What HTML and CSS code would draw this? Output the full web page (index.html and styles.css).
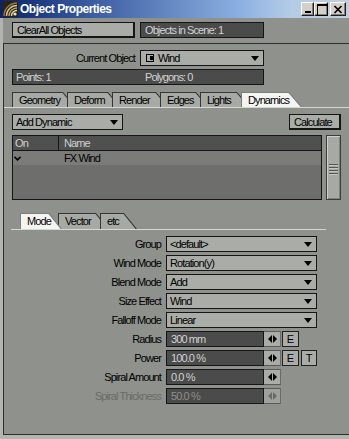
FILE: index.html
```html
<!DOCTYPE html>
<html>
<head>
<meta charset="utf-8">
<title>Object Properties</title>
<link rel="stylesheet" href="styles.css">
</head>
<body>
<div class="window">
  <div class="titlebar">
    <svg class="appicon" width="16" height="16" viewBox="0 0 16 16">
      <rect width="16" height="16" fill="#2b2519"/>
      <path d="M2 15 A13 13 0 0 1 15 2" stroke="#8c7a52" stroke-width="1.4" fill="none"/>
      <path d="M4.5 15 A10.5 10.5 0 0 1 15 4.5" stroke="#d8c08a" stroke-width="1.4" fill="none"/>
      <path d="M7 15 A8 8 0 0 1 15 7" stroke="#b9a06c" stroke-width="1.4" fill="none"/>
      <path d="M9.5 15 A5.5 5.5 0 0 1 15 9.5" stroke="#e6d6a8" stroke-width="1.4" fill="none"/>
      <circle cx="13" cy="13" r="1.6" fill="#f0e4c0"/>
    </svg>
    <span class="title">Object Properties</span>
    <div class="caption">
      <span class="cbtn cmin"></span>
      <span class="cbtn cmax"></span>
      <span class="cbtn cclose"><svg width="10" height="9" viewBox="0 0 10 9"><path d="M1.5 1 L8.5 8 M8.5 1 L1.5 8" stroke="#000" stroke-width="1.7"/></svg></span>
    </div>
  </div>
  <div class="client">
    <div class="toprow">
      <div class="btn clear">ClearAll Objects</div>
      <div class="dark count">Objects in Scene: 1</div>
    </div>
    <div class="panel">
      <div class="currow">
        <span class="curlbl">Current Object</span>
        <div class="select cursel">
          <svg class="objicon" width="8" height="8" viewBox="0 0 8 8"><rect x="0.5" y="0.5" width="7" height="7" fill="none" stroke="#000"/><rect x="4" y="2" width="3" height="4" fill="#000"/></svg>
          <span>Wind</span><i class="dd"></i>
        </div>
      </div>
      <div class="dark info"><span>Points: 1</span><span>Polygons: 0</span></div>
      <div class="tabs maintabs">
        <div class="tab t-geo"><span>Geometry</span></div>
        <div class="tab t-def"><span>Deform</span></div>
        <div class="tab t-ren"><span>Render</span></div>
        <div class="tab t-edg"><span>Edges</span></div>
        <div class="tab t-lig"><span>Lights</span></div>
        <div class="tab t-dyn active"><span>Dynamics</span></div>
      </div>
      <div class="actrow">
        <div class="select adddyn"><span>Add Dynamic</span><i class="dd"></i></div>
        <div class="btn calc">Calculate</div>
      </div>
      <div class="listrow">
        <div class="list">
          <div class="lhead"><span class="c-on">On</span><span class="c-name">Name</span></div>
          <div class="lrow"><span class="c-on"><svg width="7" height="5" viewBox="0 0 7 5"><path d="M0.5 0.8 L3.5 3.8 L6.5 0.8" stroke="#000" stroke-width="1.6" fill="none"/></svg></span><span class="c-name">FX Wind</span></div>
        </div>
        <div class="scroll"><div class="grip"><i></i><i></i><i></i><i></i></div></div>
      </div>
      <div class="tabs subtabs">
        <div class="tab s-mode active"><span>Mode</span></div>
        <div class="tab s-vec"><span>Vector</span></div>
        <div class="tab s-etc"><span>etc</span></div>
      </div>
      <div class="form">
        <div class="frow"><span class="flbl">Group</span><div class="select"><span>&lt;default&gt;</span><i class="dd"></i></div></div>
        <div class="frow"><span class="flbl">Wind Mode</span><div class="select"><span>Rotation(y)</span><i class="dd"></i></div></div>
        <div class="frow"><span class="flbl">Blend Mode</span><div class="select"><span>Add</span><i class="dd"></i></div></div>
        <div class="frow"><span class="flbl">Size Effect</span><div class="select"><span>Wind</span><i class="dd"></i></div></div>
        <div class="frow"><span class="flbl">Falloff Mode</span><div class="select"><span>Linear</span><i class="dd"></i></div></div>
        <div class="frow"><span class="flbl">Radius</span>
          <div class="numctl"><div class="dark num">300 mm</div><span class="arr"><svg width="9" height="8" viewBox="0 0 9 8"><path d="M0 4 L4 0 L4 8 Z M5 0 L9 4 L5 8 Z" fill="#000"/></svg></span><span class="sbtn">E</span></div>
        </div>
        <div class="frow"><span class="flbl">Power</span>
          <div class="numctl"><div class="dark num">100.0 %</div><span class="arr"><svg width="9" height="8" viewBox="0 0 9 8"><path d="M0 4 L4 0 L4 8 Z M5 0 L9 4 L5 8 Z" fill="#000"/></svg></span><span class="sbtn">E</span><span class="sbtn tbtn">T</span></div>
        </div>
        <div class="frow"><span class="flbl">Spiral Amount</span>
          <div class="numctl"><div class="dark num">0.0 %</div><span class="arr"><svg width="9" height="8" viewBox="0 0 9 8"><path d="M0 4 L4 0 L4 8 Z M5 0 L9 4 L5 8 Z" fill="#000"/></svg></span></div>
        </div>
        <div class="frow disabled"><span class="flbl">Spiral Thickness</span>
          <div class="numctl"><div class="dark num">50.0 %</div><span class="arr"><svg width="9" height="8" viewBox="0 0 9 8"><path d="M0 4 L4 0 L4 8 Z M5 0 L9 4 L5 8 Z" fill="#6a6a6a"/></svg></span></div>
        </div>
      </div>
    </div>
  </div>
</div>
</body>
</html>
```
FILE: styles.css
```css
* { box-sizing: border-box; }
html, body { margin: 0; padding: 0; }
body {
  background: #8e918c;
  font-family: "Liberation Sans", Arial, sans-serif;
  font-size: 11px;
  letter-spacing: -0.9px;
  color: #000;
  width: 349px;
  height: 439px;
  overflow: hidden;
}
.window {
  width: 349px;
  height: 439px;
  display: flex;
  flex-direction: column;
}

/* title bar */
.titlebar {
  height: 18px;
  flex: none;
  display: flex;
  align-items: center;
  padding-left: 2px;
  background: linear-gradient(to right, #0a246a 0, #3a5ca0 90px, #8cb0e2 240px, #b4cbe6 290px, #c2cfdd 349px);
}
.appicon { flex: none; display: block; }
.title {
  margin-left: 2px;
  color: #fff;
  font-weight: bold;
  font-size: 12px;
  letter-spacing: -0.5px;
}
.caption {
  margin-left: auto;
  display: flex;
  padding-right: 3px;
  align-self: flex-start;
  padding-top: 2px;
}
.cbtn {
  position: relative;
  display: flex;
  align-items: center;
  justify-content: center;
  height: 14px;
  background: #d4d0c8;
  border: 1px solid;
  border-color: #ffffff #202020 #202020 #ffffff;
  box-shadow: inset -1px -1px #808080;
}
.cmin { width: 13px; }
.cmax { width: 14px; }
.cclose { width: 16px; margin-left: 2px; }
.cmin::after {
  content: "";
  position: absolute;
  left: 3px;
  top: 8px;
  width: 6px;
  height: 2px;
  background: #000;
}
.cmax::after {
  content: "";
  position: absolute;
  left: 2px;
  top: 1px;
  width: 9px;
  height: 9px;
  border: 1px solid #000;
  border-top-width: 2px;
}
.cclose svg { display: block; }

/* client area */
.client {
  flex: 1;
  display: flex;
  flex-direction: column;
  border-left: 3px solid #b2b4b0;
  border-bottom: 4px solid #b2b4b0;
}
.toprow {
  display: flex;
  gap: 5px;
  padding: 4px 0 5px 9px;
}

.btn, .select, .dark {
  height: 16px;
  display: flex;
  align-items: center;
  white-space: nowrap;
}
.btn {
  background: #a9aca7;
  border-style: solid;
  border-color: #151515;
  border-width: 1px 2px 2px 1px;
  padding-left: 4px;
}
.select {
  background: #a9aca7;
  border: 1px solid #151515;
  padding-left: 3px;
  padding-right: 4px;
}
.dark {
  background: #4b4b4b;
  border: 1px solid #151515;
  color: #d2d2d2;
  padding-left: 4px;
}
.dd {
  margin-left: auto;
  width: 0;
  height: 0;
  border-left: 4px solid transparent;
  border-right: 4px solid transparent;
  border-top: 5px solid #000;
}
.clear { width: 123px; }
.count { width: 124px; }

.panel {
  flex: 1;
  border-top: 1px solid #2e2e2e;
  border-left: 1px solid #2e2e2e;
  border-bottom: 1px solid #2e2e2e;
  padding: 6px 8px 0 8px;
}
.currow {
  display: flex;
  align-items: center;
  gap: 5px;
}
.curlbl {
  width: 123px;
  text-align: right;
}
.cursel { width: 124px; }
.objicon { display: block; margin: 0 4px 0 2px; }

.info {
  margin-top: 3px;
  width: 252px;
  display: grid;
  grid-template-columns: 129px 1fr;
  padding-left: 3px;
}

/* tabs */
.tabs {
  display: flex;
  align-items: flex-end;
}
.maintabs {
  margin: 7px -8px 0 -8px;
  padding-left: 8px;
  border-bottom: 1px solid #d6d8d4;
}
.tab {
  position: relative;
  height: 15px;
  background: #363636;
  clip-path: polygon(0 0, calc(100% - 13px) 0, 100% 100%, 0 100%);
  padding: 1px 0 0 1px;
  margin-right: -9px;
  flex: none;
}
.tab > span {
  display: block;
  height: 100%;
  background: #a6a9a4;
  clip-path: polygon(0 0, calc(100% - 13.5px) 0, calc(100% - 1.4px) 100%, 0 100%);
  padding-left: 6px;
  line-height: 14px;
  white-space: nowrap;
}
.tab.active { z-index: 2; background: #7c7e7a; }
.tab.active > span { background: #f4f4f2; }
.t-geo { width: 64px; }
.t-def { width: 54px; }
.t-ren { width: 57px; }
.t-edg { width: 49px; }
.t-lig { width: 50px; }
.t-dyn { width: 61px; margin-right: 0; }

.actrow {
  margin-top: 6px;
  display: flex;
  justify-content: space-between;
}
.adddyn { width: 111px; }
.calc { width: 52px; }

/* list */
.listrow {
  margin-top: 5px;
  display: flex;
  gap: 4px;
  height: 65px;
}
.list {
  width: 312px;
  border: 1px solid #151515;
  background: #6e6f6d;
  display: flex;
  flex-direction: column;
}
.lhead, .lrow {
  display: flex;
  height: 14px;
  align-items: center;
}
.lhead {
  height: 15px;
  background: #505050;
  color: #cfcfcf;
  border-bottom: 1px solid #151515;
}
.lrow { background: #7b7c7a; }
.c-on { width: 46px; padding-left: 2px; height: 100%; display: flex; align-items: center; }
.lhead .c-on { border-right: 1px solid #151515; }
.c-name { padding-left: 5px; }
.lrow .c-on { padding-left: 1px; }
.lrow svg { display: block; }

.scroll {
  width: 15px;
  height: 65px;
  border: 1px solid #3c3c3c;
  background: #a6a9a4;
  box-shadow: inset 1px 1px #cdd0cb, inset -1px -1px #7f827d;
  display: flex;
  align-items: center;
  justify-content: center;
}
.grip {
  display: flex;
  flex-direction: column;
  gap: 2px;
  margin-top: 2px;
}
.grip i {
  display: block;
  width: 9px;
  height: 1px;
  background: #555855;
  box-shadow: 0 1px #c2c5c0;
}

/* sub tabs */
.subtabs {
  margin: 13px 0 0 -1px;
  width: 315px;
  padding-left: 9px;
  border-bottom: 1px solid #d6d8d4;
}
.subtabs .tab { height: 16px; }
.subtabs .tab > span { line-height: 15px; }
.s-mode { width: 42px; margin-right: -4px; }
.s-vec { width: 51px; margin-right: -9px; }
.s-etc { width: 37px; margin-right: 0; }

/* form */
.form {
  margin-top: 6px;
  display: flex;
  flex-direction: column;
  gap: 3px;
}
.frow {
  display: grid;
  grid-template-columns: 150px 151px;
  column-gap: 4px;
  align-items: center;
  height: 16px;
}
.flbl {
  text-align: right;
  padding-right: 1px;
  white-space: nowrap;
}
.numctl {
  display: flex;
  height: 16px;
}
.num { width: 98px; }
.arr {
  width: 17px;
  height: 16px;
  background: #a9aca7;
  border-top: 1px solid #5a5a5a;
  border-bottom: 1px solid #5a5a5a;
  border-right: 1px solid #6a6a6a;
  display: flex;
  align-items: center;
  justify-content: center;
  margin-right: 1px;
}
.arr svg { display: block; }
.sbtn {
  width: 17px;
  height: 16px;
  background: #a9aca7;
  border: 1px solid #202020;
  display: flex;
  align-items: center;
  justify-content: center;
  letter-spacing: 0;
}
.tbtn { width: 16px; margin-left: 2px; }
.disabled .flbl { color: #696c68; }
.disabled .num { color: #8e8e8e; }
.disabled .arr { background: #9ea19c; }
```
